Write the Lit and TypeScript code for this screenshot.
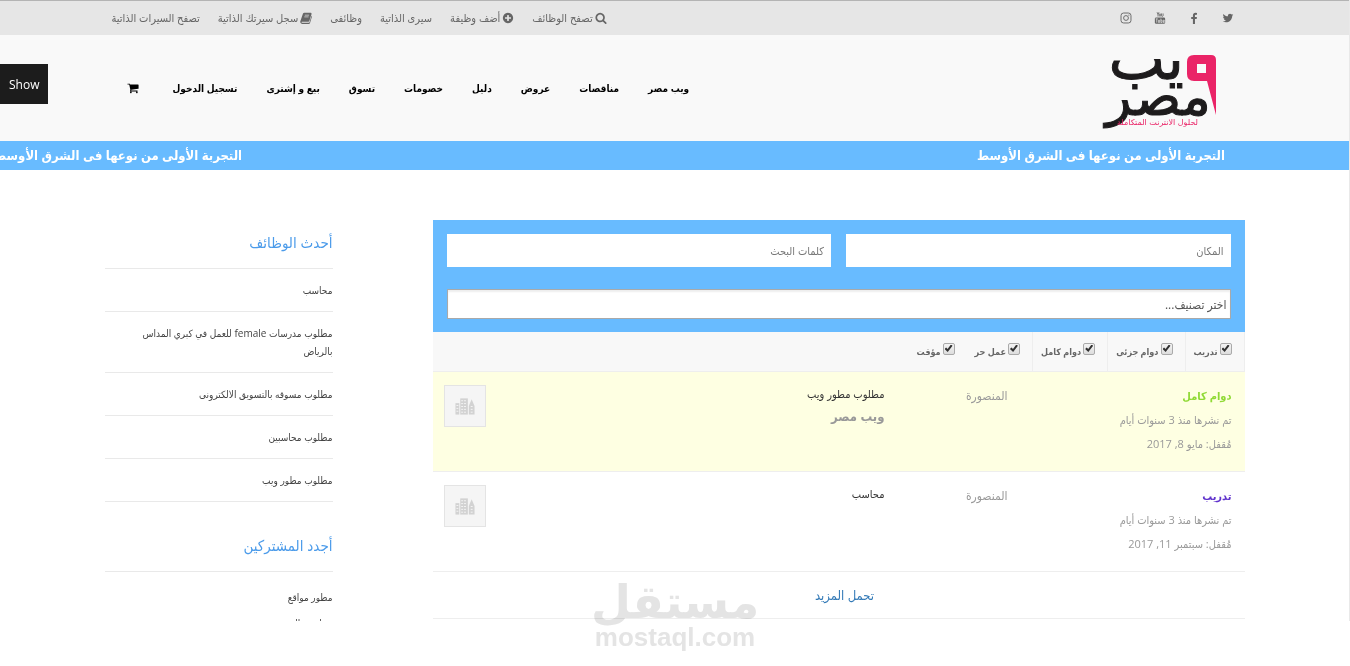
import { LitElement, html, svg, css } from "lit";
import { customElement } from "lit/decorators.js";

const fa = (d: string) => html`<svg class="fa" viewBox="0 0 1792 1792" aria-hidden="true"><path fill="currentColor" d=${d}></path></svg>`;

const SEARCH = "M1216 832q0-185-131.500-316.500T768 384 451.500 515.500 320 832t131.500 316.500T768 1280t316.500-131.500T1216 832zm512 832q0 52-38 90t-90 38q-54 0-90-38l-343-342q-179 124-399 124-143 0-273.500-55.500t-225-150-150-225T64 832t55.500-273.500 150-225 225-150T768 128t273.500 55.500 225 150 150 225T1472 832q0 220-124 399l343 343q37 37 37 90z";
const PLUS = "M1344 960v-128q0-26-19-45t-45-19h-256V512q0-26-19-45t-45-19H832q-26 0-45 19t-19 45v256H512q-26 0-45 19t-19 45v128q0 26 19 45t45 19h256v256q0 26 19 45t45 19h128q26 0 45-19t19-45v-256h256q26 0 45-19t19-45zm320-64q0 209-103 385.500T1281.500 1561 896 1664t-385.500-103T231 1281.500 128 896t103-385.500T510.500 231 896 128t385.500 103T1561 510.500 1664 896z";
const TWITTER = "M1684 408q-67 98-162 167 1 14 1 42 0 130-38 259.500t-115.500 248.500-184.500 210.500-258 146-323 54.500q-271 0-496-145 35 4 78 4 225 0 401-138-105-2-188-64.500t-114-159.500q33 5 61 5 43 0 85-11-112-23-185.500-111.500t-73.500-205.500v-4q68 38 146 41-66-44-105-115t-39-154q0-88 44-163 121 149 294.500 238.500t371.500 99.500q-8-38-8-74 0-134 94.500-228.500t228.500-94.500q140 0 236 102 109-21 205-78-37 115-142 178 93-10 186-50z";
const FACEBOOK = "M1343 140v264h-157q-86 0-116 36t-30 108v189h293l-39 296h-254v759H734v-759H479V737h255V519q0-186 104-288.500T1115 128q147 0 228 12z";
const CART = "M704 1536q0 52-38 90t-90 38-90-38-38-90 38-90 90-38 90 38 38 90zm896 0q0 52-38 90t-90 38-90-38-38-90 38-90 90-38 90 38 38 90zm128-1088v512q0 24-16.500 42.500t-40.500 21.500l-1044 122q13 60 13 70 0 16-24 64h920q26 0 45 19t19 45-19 45-45 19H512q-26 0-45-19t-19-45q0-11 8-31.500t16-36 21.500-40T509 1200L332 378H128q-26 0-45-19t-19-45 19-45 45-19h256q16 0 28.500 6.500T432 272t13 24.500 8 26 5.500 29.500 4.500 26h1201q26 0 45 19t19 45z";

const book = html`<svg class="fa" viewBox="0 0 14 14" aria-hidden="true">
  <path fill="currentColor" d="M5 1h7.500q1.300 .2 .9 1.500L11 10.300q-.3 1-1.300 1H2.300q-.9 .1-.6 .8.200.5 1 .5h7.500q.7 0 .9-.7l2.300-7.500q.7.400.4 1.400l-2.100 7q-.4 1-1.500 1.100H2.400Q.6 13.600.3 12q-.1-.8.200-1.600L3.400 2Q3.900 1 5 1z"></path>
  <path stroke="#e6e6e6" stroke-width=".8" d="M5.600 3.700h5M5 5.700h5"></path></svg>`;
const youtube = html`<svg class="fa" viewBox="0 0 14 14" aria-hidden="true">
  <path fill="none" stroke="currentColor" stroke-width="1" d="M3.600.3l1.100 2.600L5.800.3M4.700 2.900v2.400M8.800 1.700v2.600q0 .8.800.8t1-.6V1.700"></path>
  <rect fill="none" stroke="currentColor" x="6.300" y="2.100" width="1.400" height="2.900" rx=".7"></rect>
  <rect fill="currentColor" x="1" y="6.400" width="12" height="7.400" rx="1.600"></rect>
  <path fill="none" stroke="#e6e6e6" stroke-width=".8" d="M2 8h2.400M3.200 8v4.400M5.200 9.200v3h1.300v-3M8 7.600v4.700h1.300V9.500H8M12 11.500v.8h-1.200V9.500H12V11h-1.200"></path></svg>`;
const instagram = html`<svg class="fa" viewBox="0 0 14 14" aria-hidden="true">
  <g fill="none" stroke="currentColor" stroke-width="1.100"><rect x="1.200" y="1.200" width="11.600" height="11.600" rx="3"></rect><circle cx="7" cy="7" r="2.800"></circle></g>
  <circle cx="10.400" cy="3.600" r=".7" fill="currentColor"></circle></svg>`;

const windows = (x: number, y: number, cols: number, rows: number) =>
  Array.from({ length: cols * rows }, (_, i) => svg`<rect x=${x + (i % cols) * 3} y=${y + Math.floor(i / cols) * 3} width="2" height="1"></rect>`);

const company = html`<svg class="company" viewBox="0 0 42 42" role="img" aria-label="شركة">
  <g fill="#d2d2d2"><rect x="11" y="18" width="4" height="12"></rect><rect x="16" y="13" width="8" height="17"></rect><path d="M25 30V21l3-7 3 7v9z"></path></g>
  <g fill="#f5f5f5">${windows(12, 20, 1, 3)}${windows(17, 15, 2, 5)}${windows(27, 21, 1, 3)}</g></svg>`;

const TOP_LINKS = [
  { text: "تصفح الوظائف", icon: fa(SEARCH) },
  { text: "أضف وظيفة", icon: fa(PLUS) },
  { text: "سيرى الذاتية" },
  { text: "وظائفى" },
  { text: "سجل سيرتك الذاتية", icon: book },
  { text: "تصفح السيرات الذاتية" },
];
const MENU = ["ويب مصر", "مناقصات", "عروض", "دليل", "خصومات", "تسوق", "بيع و إشترى", "تسجيل الدخول"];
const SLOGAN = "التجربة الأولى من نوعها فى الشرق الأوسط";
const TYPES = ["تدريب", "دوام جزئى", "دوام كامل", "عمل حر", "مؤقت"];
const LATEST = ["محاسب", "مطلوب مدرسات female للعمل في كبري المداس بالرياض", "مطلوب مسوقه بالتسويق الالكترونى", "مطلوب محاسبين", "مطلوب مطور ويب"];
const JOBS = [
  { type: "دوام كامل", kind: "full", closes: "مُقفل: مايو 8, 2017", title: "مطلوب مطور ويب", company: "ويب مصر" },
  { type: "تدريب", kind: "intern", closes: "مُقفل: سبتمبر 11, 2017", title: "محاسب", company: "" },
];

@customElement("app-root")
export class AppRoot extends LitElement {
  static styles = css`
    :host { display: block; position: relative; height: 100vh; padding-bottom: 45px; box-sizing: border-box; background: #fff; color: #444;
      direction: rtl; font-family: "Open Sans", "DejaVu Sans Condensed", "DejaVu Sans", sans-serif; font-size: 12px; }
    *, *::before { box-sizing: border-box; }
    a { color: inherit; text-decoration: none; }
    ul { list-style: none; margin: 0; padding: 0; }
    h2, h3, p { margin: 0; font-weight: 400; }
    .page { height: 100%; overflow: hidden; border-right: 1px solid #e9e9e9; }
    .wrap { max-width: 1140px; margin: 0 auto; }
    .fa { width: 12px; height: 12px; flex: none; }

    .topbar { background: #e6e6e6; border-top: 1px solid #b4b4b4; color: #666; }
    .topbar .wrap { display: flex; justify-content: space-between; align-items: center; height: 34px; padding: 0 11px 0 7px; }
    .social { display: flex; gap: 22px; }
    .social a { display: flex; }
    .toplinks { display: flex; gap: 18px; font-size: 11px; line-height: 16px; }
    .toplinks a { display: flex; align-items: center; gap: 2px; white-space: nowrap; }

    .header { background: #f9f9f9; }
    .header .wrap { display: flex; justify-content: space-between; align-items: center; height: 106px; padding: 0 27px 0 22px; }
    .logo { width: 116px; height: 80px; display: block; overflow: visible; }
    .menu { display: flex; align-items: center; gap: 29px; font-size: 10px; font-weight: 700; color: #000; white-space: nowrap; }
    .menu .fa { display: block; margin-right: 5px; }

    .ticker { display: flex; gap: 60%; overflow: hidden; padding-right: 124px; background: #68bbff; color: #fff; font-size: 13px; font-weight: 700; line-height: 29px; white-space: nowrap; }
    .ticker span { flex: none; }

    .body { display: grid; grid-template-columns: 812fr 228fr; gap: 100px; padding-top: 50px; align-items: start; }
    .search { display: grid; grid-template-columns: 1fr 1fr; gap: 22px 15px; padding: 14px 14px 13px; background: #68bbff; }
    .field { min-width: 0; height: 33px; border: 0; border-radius: 0; padding: 0 7px; background: #fff; color: #666; font: inherit; font-size: 11px; }
    .field::placeholder { color: #777; opacity: 1; }
    .choice { grid-column: 1 / -1; height: 30px; padding: 0 3px; appearance: none; border: 1px solid #a9a9a9; box-shadow: inset 0 2px 2px #eee; color: #555; font-size: 12px; }

    .types { display: flex; background: #f8f8f8; border: 1px solid #eee; border-width: 0 1px 1px 0; }
    .types li { border-left: 1px solid #eee; padding: 0 12px 0 8px; }
    .types li:nth-child(n + 4) { border-left: 0; }
    .types label { display: flex; align-items: center; gap: 2px; height: 39px; font-size: 9px; font-weight: 700; color: #666; white-space: nowrap; }
    .tick { appearance: none; width: 12px; height: 12px; margin: 0 0 6px; border: 1px solid #aaa; border-radius: 2px; background: linear-gradient(#f4f4f4, #ddd); display: grid; place-items: center; }
    .tick:checked::before { content: ""; width: 8px; height: 8px; background: #333; clip-path: polygon(0 55%, 20% 36%, 38% 56%, 80% 0, 100% 16%, 40% 95%); }

    .job { display: grid; grid-template-columns: 224fr 123fr 399fr 42px; padding: 12px 13px 0 11px; height: 100px; border-bottom: 1px solid #eee; color: #999; line-height: 24px; }
    .featured { background: #feffe2; }
    .meta { font-size: 11px; }
    .full { color: #90da36; font-weight: 700; }
    .intern { color: #6033cc; font-weight: 700; }
    .job h3 { font-size: 11px; line-height: 20px; color: #333; }
    .firm { font-size: 13px; font-weight: 700; }
    .company { width: 42px; height: 42px; margin-top: 1px; border: 1px solid #e4e4e4; background: #f5f5f5; }
    .more { display: block; border-bottom: 1px solid #eee; padding-left: 12px; line-height: 46px; font-size: 13px; text-align: center; color: #337ab7; }

    .side h2 { padding: 10px 0 14px; line-height: 24px; font-size: 15px; color: #4b9bea; border-bottom: 1px solid #e9e9e9; }
    .side { font-size: 10px; line-height: 18px; }
    .latest li { padding: 12px 0 12px 20px; border-bottom: 1px solid #e9e9e9; }
    .latest { margin-bottom: 21px; }
    .people { padding-top: 12px; line-height: 26px; }

    .show { position: absolute; left: 0; top: 64px; height: 40px; padding: 0 9px; border: 0; background: #1c1c1c; color: #fff; font: inherit; }
    .watermark { position: absolute; left: 50%; bottom: 12px; width: 166px; height: 78px; margin-left: -83px; overflow: visible; mix-blend-mode: multiply; pointer-events: none; }
  `;

  render() {
    return html`
      <div class="page">
        <div class="topbar"><div class="wrap">
          <div class="social">
            <a href="#" aria-label="Twitter">${fa(TWITTER)}</a>
            <a href="#" aria-label="Facebook">${fa(FACEBOOK)}</a>
            <a href="#" aria-label="YouTube">${youtube}</a>
            <a href="#" aria-label="Instagram">${instagram}</a>
          </div>
          <nav class="toplinks">${TOP_LINKS.map((l) => html`<a href="#">${l.icon ?? ""}${l.text}</a>`)}</nav>
        </div></div>

        <header class="header"><div class="wrap">
          <a href="#" aria-label="ويب مصر">
            <svg class="logo" viewBox="0 0 116 80" direction="rtl">
              <path fill="#ea2467" fill-rule="evenodd" d="M92 7h17q5 0 5 5v55L105 33H92q-7 0-7-7V14q0-7 7-7zm3 9v9h9v-9z"></path>
              <g fill="#1d1b1c" stroke="#1d1b1c" font-family="DejaVu Sans" font-weight="400">
                <text x="82" y="31" font-size="60">يب</text>
                <text x="109" y="67" font-size="54">مصر</text>
              </g>
              <text x="96" y="77" font-size="8" fill="#ea2467" font-family="DejaVu Sans">لحلول الانترنت المتكاملة</text>
            </svg>
          </a>
          <nav class="menu">${MENU.map((m) => html`<a href="#">${m}</a>`)}<a href="#" aria-label="سلة التسوق">${fa(CART)}</a></nav>
        </div></header>

        <div class="ticker"><span>${SLOGAN}</span><span>${SLOGAN}</span></div>

        <div class="wrap body">
          <main>
            <form class="search">
              <input class="field" type="text" placeholder="المكان" aria-label="المكان">
              <input class="field" type="text" placeholder="كلمات البحث" aria-label="كلمات البحث">
              <select class="field choice" aria-label="اختر تصنيف"><option>اختر تصنيف...</option></select>
            </form>
            <ul class="types">${TYPES.map((t) => html`<li><label><input class="tick" type="checkbox" checked>${t}</label></li>`)}</ul>
            ${JOBS.map((j) => html`<article class="job ${j.kind === "full" ? "featured" : ""}">
              <div class="meta"><p class=${j.kind}>${j.type}</p><p>تم نشرها منذ 3 سنوات أيام</p><p>${j.closes}</p></div>
              <p>المنصورة</p>
              <div><h3><a href="#">${j.title}</a></h3><p class="firm">${j.company}</p></div>
              ${company}
            </article>`)}
            <a class="more" href="#">تحمل المزيد</a>
          </main>
          <aside class="side">
            <h2>أحدث الوظائف</h2>
            <ul class="latest">${LATEST.map((t) => html`<li><a href="#">${t}</a></li>`)}</ul>
            <h2>أجدد المشتركين</h2>
            <ul class="people"><li><a href="#">مطور مواقع</a></li><li><a href="#">محاسب القدس حديثة</a></li></ul>
          </aside>
        </div>
      </div>
      <button class="show" type="button">Show</button>
      <svg class="watermark" viewBox="0 0 166 78" role="img" aria-label="mostaql.com">
        <g fill="#e4e4e4" font-weight="700" text-anchor="middle">
          <text x="83" y="42" font-size="46" font-family="DejaVu Sans">مستقل</text>
          <text x="83" y="70" font-size="26" font-family="Liberation Sans">mostaql.com</text>
        </g>
      </svg>`;
  }
}
